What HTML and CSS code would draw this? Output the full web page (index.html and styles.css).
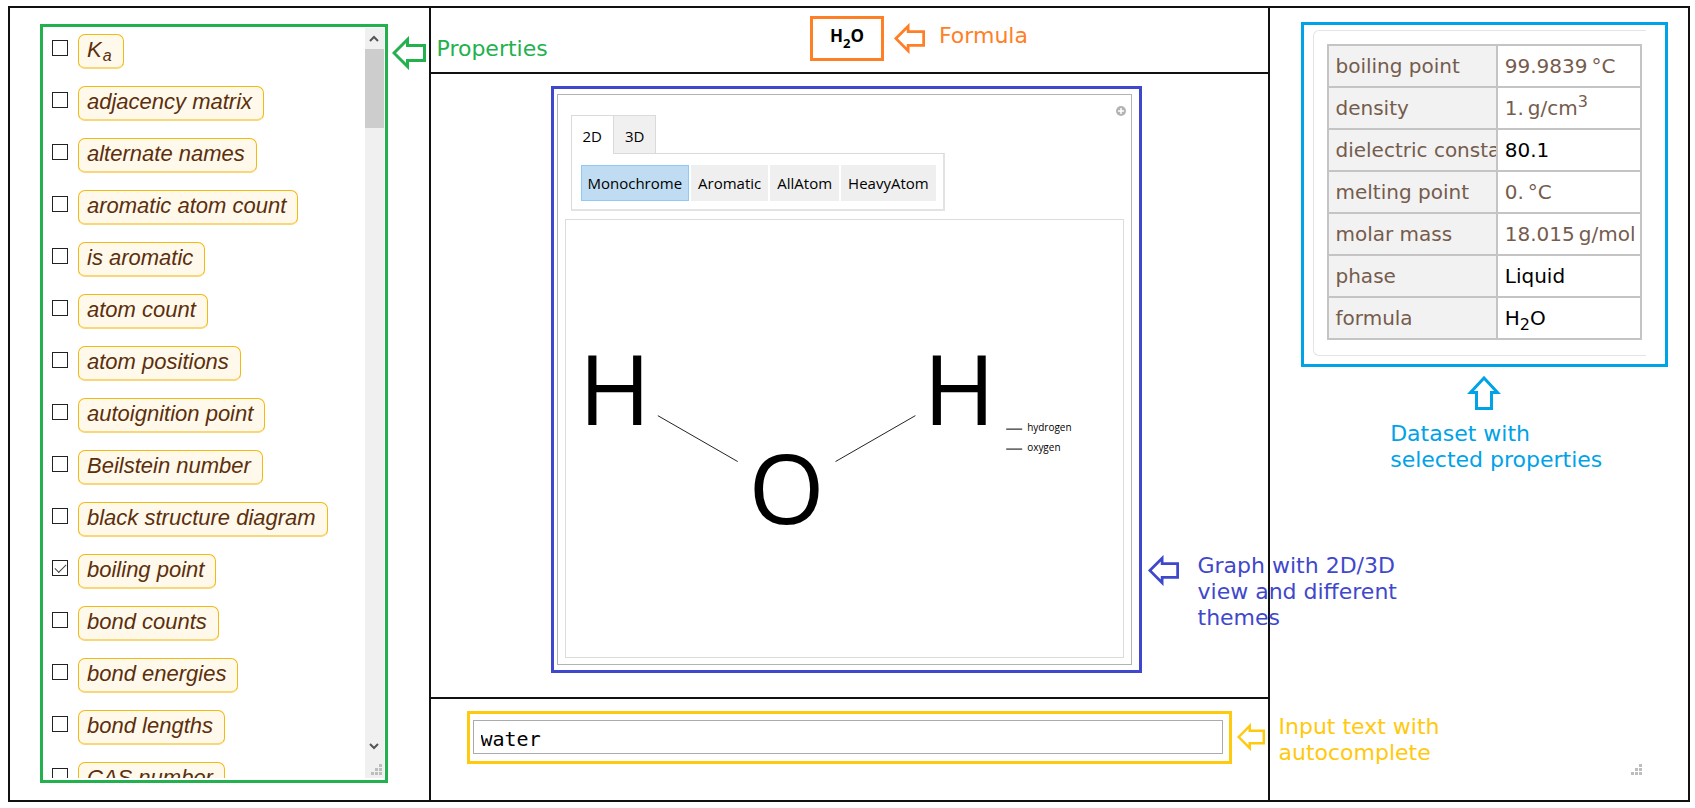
FILE: index.html
```html
<!DOCTYPE html>
<html lang="en">
<head>
<meta charset="utf-8">
<title>Chemical explorer</title>
<link rel="stylesheet" href="styles.css">
</head>
<body>
<svg class="defs" width="0" height="0" aria-hidden="true">
  <symbol id="arrow-left" viewBox="0 0 34 34"><path d="M2 17 L15.500 3.500 V9.500 H32.500 V24.500 H15.500 V30.500 Z" fill="none" stroke="currentColor" stroke-width="3"/></symbol>
  <symbol id="arrow-up" viewBox="0 0 34 34"><path d="M17 2 L30.500 16.500 H24.500 V32.500 H9.500 V16.500 H3.500 Z" fill="none" stroke="currentColor" stroke-width="3"/></symbol>
  <symbol id="grip" viewBox="0 0 11 11"><path d="M8 0h3v3h-3zM4 4h3v3h-3zM8 4h3v3h-3zM0 8h3v3h-3zM4 8h3v3h-3zM8 8h3v3h-3z" fill="#bdbdbd"/></symbol>
</svg>
<main class="frame">
  <section class="side">
    <div class="properties">
      <div class="property-list">
        <label class="property"><input type="checkbox"><span class="chip">K<sub>a</sub></span></label>
        <label class="property"><input type="checkbox"><span class="chip">adjacency matrix</span></label>
        <label class="property"><input type="checkbox"><span class="chip">alternate names</span></label>
        <label class="property"><input type="checkbox"><span class="chip">aromatic atom count</span></label>
        <label class="property"><input type="checkbox"><span class="chip">is aromatic</span></label>
        <label class="property"><input type="checkbox"><span class="chip">atom count</span></label>
        <label class="property"><input type="checkbox"><span class="chip">atom positions</span></label>
        <label class="property"><input type="checkbox"><span class="chip">autoignition point</span></label>
        <label class="property"><input type="checkbox"><span class="chip">Beilstein number</span></label>
        <label class="property"><input type="checkbox"><span class="chip">black structure diagram</span></label>
        <label class="property"><input type="checkbox" checked><span class="chip">boiling point</span></label>
        <label class="property"><input type="checkbox"><span class="chip">bond counts</span></label>
        <label class="property"><input type="checkbox"><span class="chip">bond energies</span></label>
        <label class="property"><input type="checkbox"><span class="chip">bond lengths</span></label>
        <label class="property"><input type="checkbox"><span class="chip">CAS number</span></label>
      </div>
      <div class="scrollbar">
        <button class="scroll-button" aria-label="Scroll up"><svg width="10" height="8" viewBox="0 0 10 8"><path d="M1 6 L5 2 L9 6" fill="none" stroke="#555" stroke-width="2"/></svg></button>
        <div class="scroll-thumb"></div>
        <button class="scroll-button scroll-down" aria-label="Scroll down"><svg width="10" height="8" viewBox="0 0 10 8"><path d="M1 2 L5 6 L9 2" fill="none" stroke="#555" stroke-width="2"/></svg></button>
        <div class="scroll-corner"><svg width="11" height="11"><use href="#grip"/></svg></div>
      </div>
      <div class="note note-properties"><svg width="34" height="34"><use href="#arrow-left"/></svg><span>Properties</span></div>
    </div>
  </section>

  <section class="center">
    <div class="formula-cell">
      <div class="formula">H<sub>2</sub>O
        <div class="note note-formula"><svg width="31" height="31"><use href="#arrow-left"/></svg><span>Formula</span></div>
      </div>
    </div>
    <div class="graph-cell">
      <div class="graph">
        <div class="manipulate">
          <button class="plus" aria-label="Options"><svg width="10" height="10" viewBox="0 0 10 10"><circle cx="5" cy="5" r="5" fill="#b3b3b3"/><path d="M5 2v6M2 5h6" stroke="#fff" stroke-width="1.500"/></svg></button>
          <div class="tabs"><button class="tab active">2D</button><button class="tab">3D</button></div>
          <div class="themes"><button class="theme selected">Monochrome</button><button class="theme">Aromatic</button><button class="theme">AllAtom</button><button class="theme">HeavyAtom</button></div>
          <svg class="molecule" viewBox="0 0 558 438" role="img" aria-label="Structure of water">
            <g class="atoms" font-size="98" text-anchor="middle">
              <text x="49" y="205">H</text>
              <text x="221" y="305">O</text>
              <text x="394" y="205">H</text>
            </g>
            <path d="M92 196 L172 242 M270 242 L350 196" stroke="#222" fill="none"/>
            <path d="M441 209.500 h16 M441 229.500 h16" stroke="#000" fill="none"/>
            <g class="legend" font-size="10"><text x="462" y="211">hydrogen</text><text x="462" y="231">oxygen</text></g>
          </svg>
        </div>
        <div class="note note-graph"><svg width="31" height="31"><use href="#arrow-left"/></svg><span>Graph with 2D/3D<br>view and different<br>themes</span></div>
      </div>
    </div>
    <div class="input-cell">
      <div class="query">
        <input type="text" value="water" aria-label="Compound name">
        <div class="note note-input"><svg width="28" height="28"><use href="#arrow-left"/></svg><span>Input text with<br>autocomplete</span></div>
      </div>
    </div>
  </section>

  <section class="results">
    <div class="dataset">
      <div class="dataset-inner">
        <table>
          <tr><th scope="row">boiling point</th><td>99.9839&#8201;°C</td></tr>
          <tr><th scope="row">density</th><td>1.&#8201;g/cm<sup>3</sup></td></tr>
          <tr><th scope="row">dielectric consta</th><td class="plain">80.1</td></tr>
          <tr><th scope="row">melting point</th><td>0.&#8201;°C</td></tr>
          <tr><th scope="row">molar mass</th><td>18.015&#8201;g/mol</td></tr>
          <tr><th scope="row">phase</th><td class="plain">Liquid</td></tr>
          <tr><th scope="row">formula</th><td class="plain">H<sub>2</sub>O</td></tr>
        </table>
      </div>
    </div>
    <div class="dataset-note"><svg width="34" height="34"><use href="#arrow-up"/></svg><span>Dataset with<br>selected properties</span></div>
    <svg class="corner-grip" width="11" height="11"><use href="#grip"/></svg>
  </section>
</main>
</body>
</html>
```
FILE: styles.css
```css
* { box-sizing: border-box; }

body {
  margin: 0;
  padding: 6px 5px 6px 8px;
  background: #fff;
  color: #000;
  font-family: "Open Sans", sans-serif;
}

button { font: inherit; color: inherit; border: 0; padding: 0; background: none; }
svg { display: block; flex: none; }
.defs { position: absolute; }

.frame {
  display: grid;
  grid-template-columns: calc(25% - 1px) minmax(0, 1fr) calc(25% - 1px);
  grid-template-rows: minmax(0, 1fr);
  height: calc(100vh - 12px);
  min-height: 780px;
  border: 2px solid #111;
}

/* Callouts */
.note {
  position: absolute;
  left: 100%;
  z-index: 1;
  display: flex;
  align-items: flex-start;
  font: 22px/26px "DejaVu Sans", sans-serif;
  white-space: nowrap;
}
.note-properties { top: 9px; margin-left: 7px; gap: 11px; color: #22b14c; }
.note-formula { top: 4px; margin-left: 13px; gap: 14px; color: #ff7f27; }
.note-graph { top: 464px; margin-left: 9px; gap: 19px; color: #3f48cc; }
.note-graph svg { margin-top: 2px; }
.note-input { top: 0; margin-left: 8px; gap: 14px; color: #ffc90e; }
.note-input svg { margin-top: 9px; }

/* Property list */
.side { display: flex; padding: 16px 41px 17px 30px; }
.properties {
  position: relative;
  flex: 1;
  display: flex;
  min-width: 0;
  padding: 1px 1px 2px 0;
  border: 3px solid #22b14c;
}
.property-list {
  flex: 1;
  display: flex;
  flex-direction: column;
  gap: 17px;
  min-width: 0;
  padding: 6px 0 0 9px;
  overflow: hidden;
}
.property { flex: none; display: flex; align-items: flex-start; gap: 10px; height: 35px; }
.property input {
  appearance: none;
  flex: none;
  width: 16px;
  height: 16px;
  margin: 6px 0 0;
  border: 1px solid #222;
  background: #fff;
}
.property input:checked::before {
  content: "";
  display: block;
  width: 10px;
  height: 5px;
  margin: 3px 0 0 2px;
  border: solid #444;
  border-width: 0 0 1px 1px;
  transform: rotate(-45deg);
}
.chip {
  height: 35px;
  padding: 0 11px 0 8px;
  border: 1px solid #f2b90f;
  border-bottom: 2px solid #f7d777;
  border-radius: 7px;
  background: #fff9ec;
  color: #5c2f0c;
  font: italic 22px/29px "Liberation Sans", Arial, sans-serif;
  white-space: nowrap;
}
.chip sub { font-size: 16px; line-height: 0; vertical-align: -4px; margin-left: 1px; }

.scrollbar { flex: none; display: flex; flex-direction: column; width: 19px; background: #f0f0f0; }
.scroll-button { display: flex; align-items: center; justify-content: center; height: 21px; }
.scroll-thumb { height: 79px; background: #cdcdcd; }
.scroll-down { margin-top: auto; }
.scroll-corner { height: 22px; padding: 8px 0 0 6px; }

/* Centre column */
.center { display: flex; flex-direction: column; border: solid #111; border-width: 0 2px; }
.formula-cell { display: flex; justify-content: center; padding: 8px 4px 11px 0; }
.formula {
  position: relative;
  height: 45px;
  padding: 0 17px;
  border: 3px solid #ff7f27;
  font-size: 17px;
  font-weight: 700;
  line-height: 34px;
}
.formula sub { font-size: 13px; line-height: 0; vertical-align: -6px; }
.formula .note { font-weight: 400; }

.graph-cell { padding: 12px 126px 24px 120px; border-top: 2px solid #111; }
.graph { position: relative; padding: 5px 7px 5px 3px; border: 3px solid #3f48cc; }
.manipulate {
  position: relative;
  padding: 20px 7px 6px;
  border: 1px solid #b3b3b3;
  font-size: 15px;
}
.plus { position: absolute; top: 11px; right: 5px; }
.tabs { display: flex; margin-left: 6px; }
.tab {
  height: 38px;
  padding: 3px 11px 0;
  border: 1px solid #dadada;
  border-bottom: 0;
  background: #f0f0f0;
}
.tab.active { position: relative; z-index: 1; height: 39px; margin-bottom: -1px; padding-bottom: 1px; border-right: 0; background: #fff; }
.themes {
  display: flex;
  gap: 2px;
  width: fit-content;
  margin: 0 0 8px 6px;
  padding: 11px 7px 8px 9px;
  border: 1px solid #dadada;
  border-right: 2px solid #e3e3e3;
  border-bottom: 2px solid #e3e3e3;
}
.theme { height: 36px; padding: 0 6px; border: 1px solid #efefef; background: #efefef; }
.theme.selected { border-color: #90c8f6; background: #bfdcf2; }
.molecule { width: 100%; height: auto; border: 1px solid #dcdcdc; }

.input-cell { flex: 1; padding: 12px 36px; border-top: 2px solid #111; }
.query { position: relative; padding: 6px 6px 7px 3px; border: 3px solid #ffc90e; }
.query input {
  display: block;
  width: 100%;
  height: 34px;
  padding: 3px 7px 0;
  border: 1px solid #ababab;
  background: #fff;
  color: #000;
  font: 20px "DejaVu Sans Mono", monospace;
}

/* Dataset column */
.results {
  display: flex;
  flex-direction: column;
  padding: 14px 20px 25px 31px;
  font-family: "DejaVu Sans", sans-serif;
}
.dataset { padding: 5px 19px 8px 9px; border: 3px solid #00a2e8; }
.dataset-inner {
  padding: 13px 4px 15px 13px;
  border: 1px solid #e4e4e4;
  border-right: 0;
  border-radius: 6px 0 0 6px;
}
table { width: 100%; table-layout: fixed; border-collapse: collapse; border: 2px solid #c4c4c4; }
th, td {
  height: 42px;
  padding: 0 0 0 7px;
  border: 2px solid #c4c4c4;
  color: #755c4d;
  font-size: 20px;
  font-weight: 400;
  line-height: 30px;
  text-align: left;
  white-space: nowrap;
}
th { width: 54%; overflow: hidden; background: #f2f2f2; }
td.plain { color: #000; }
sup, sub { font-size: 16px; line-height: 0; }
td sup { vertical-align: 8px; }
td sub { vertical-align: -5px; }
.dataset-note {
  display: flex;
  flex-direction: column;
  align-items: center;
  gap: 11px;
  margin-top: 9px;
  color: #00a2e8;
  font-size: 22px;
  line-height: 26px;
}
.dataset-note span { padding-left: 24px; }
.corner-grip { margin: auto 26px 0 auto; }
```
